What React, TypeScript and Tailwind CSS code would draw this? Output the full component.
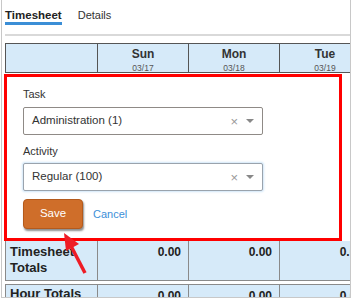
import React from "react";

function Select({ value, focused }: { value: string; focused?: boolean }) {
  return (
    <div
      className={
        "flex h-[28px] w-[240px] items-center rounded-[2px] border bg-white pl-[8px] pr-[8px] " +
        (focused
          ? "border-[#9aa3ad] shadow-[0_0_2px_1px_rgba(150,200,240,0.45)]"
          : "border-[#8f8a86]")
      }
    >
      <span className="flex-1 text-[11.5px] text-[#333]">{value}</span>
      <span className="mr-[8px] text-[13px] leading-none text-[#999]">×</span>
      <span className="h-0 w-0 border-x-[4px] border-t-[4px] border-x-transparent border-t-[#888]" />
    </div>
  );
}

function DayHead({ day, date }: { day: string; date: string }) {
  return (
    <div className="flex w-[91px] shrink-0 flex-col items-center border-l border-[#555] pt-[3px]">
      <span className="text-[12px] font-bold leading-[14px] text-[#333]">{day}</span>
      <span className="mt-[2px] text-[8.5px] leading-[11px] text-[#555]">{date}</span>
    </div>
  );
}

function TotalCell() {
  return (
    <div className="w-[91px] shrink-0 border-l border-[#8a8a8a] pr-[7px] pt-[4px] text-right text-[12px] font-bold leading-[14px] text-[#222]">
      0.00
    </div>
  );
}

export default function App() {
  return (
    <div className="relative h-[299px] w-[352px] overflow-hidden bg-white font-['Liberation_Sans',Arial,sans-serif] text-[#333]">
      <div className="ml-[1px] h-[298px] w-[350px] overflow-hidden border-x border-b border-[#c8c8c8]">
        {/* tabs */}
        <div className="flex items-end gap-[16px] pl-[3px] pt-[9px]">
          <div className="border-b-[3px] border-[#3b8ed6] text-[11.5px] font-bold leading-[13px] text-[#222]">
            Timesheet
          </div>
          <div className="pb-[3px] text-[11px] leading-[13px] text-[#333]">Details</div>
        </div>
        <div className="ml-[3px] mt-[9px] h-[2px] bg-[#d9d9d9]" />

        {/* table header */}
        <div className="ml-[3px] mt-[7px] flex h-[30px] w-[400px] border-y border-[#555] bg-[#d6eaf9]">
          <div className="w-[92px] shrink-0 border-l border-[#555]" />
          <DayHead day="Sun" date="03/17" />
          <DayHead day="Mon" date="03/18" />
          <DayHead day="Tue" date="03/19" />
        </div>

        {/* edit panel */}
        <div className="ml-[2px] mt-[1px] flex h-[167px] w-[338px] flex-col border-[3px] border-[#ff0000] bg-white pl-[16px] pt-[10px]">
          <label className="text-[11px] leading-[14px] text-[#333]">Task</label>
          <div className="mt-[6px]">
            <Select value="Administration (1)" />
          </div>
          <label className="mt-[9px] text-[11px] leading-[14px] text-[#333]">Activity</label>
          <div className="mt-[5px]">
            <Select value="Regular (100)" focused />
          </div>
          <div className="mt-[8px] flex items-center gap-[10px]">
            <button className="h-[30px] w-[60px] rounded-[4px] border border-[#b45a1c] bg-[#cf6e2a] text-[11.5px] text-white shadow-[1px_2px_2px_rgba(0,0,0,0.45)]">
              Save
            </button>
            <span className="text-[11px] text-[#3d8fd8]">Cancel</span>
          </div>
        </div>

        {/* totals rows */}
        <div className="ml-[3px] flex h-[40px] w-[400px] border-b border-[#8a8a8a] bg-[#d6eaf9]">
          <div className="w-[92px] shrink-0 border-l border-[#8a8a8a] pl-[4px] pt-[3px] text-[13px] font-bold leading-[16px] text-[#222]">
            Timesheet
            <br />
            Totals
          </div>
          <TotalCell />
          <TotalCell />
          <TotalCell />
        </div>
        <div className="ml-[3px] mt-[3px] flex h-[20px] w-[400px] border-t border-[#8a8a8a] bg-[#d6eaf9]">
          <div className="w-[92px] shrink-0 border-l border-[#8a8a8a] pl-[4px] pt-[1px] text-[13px] font-bold leading-[16px] text-[#222]">
            Hour Totals
          </div>
          <TotalCell />
          <TotalCell />
          <TotalCell />
        </div>
      </div>

      {/* annotation arrow */}
      <svg className="pointer-events-none absolute left-0 top-0" width="352" height="299">
        <line x1="85" y1="273" x2="71" y2="246" stroke="#ee1c25" strokeWidth="3.5" />
        <polygon points="64,233 79,244 66,251" fill="#ee1c25" />
      </svg>
    </div>
  );
}
